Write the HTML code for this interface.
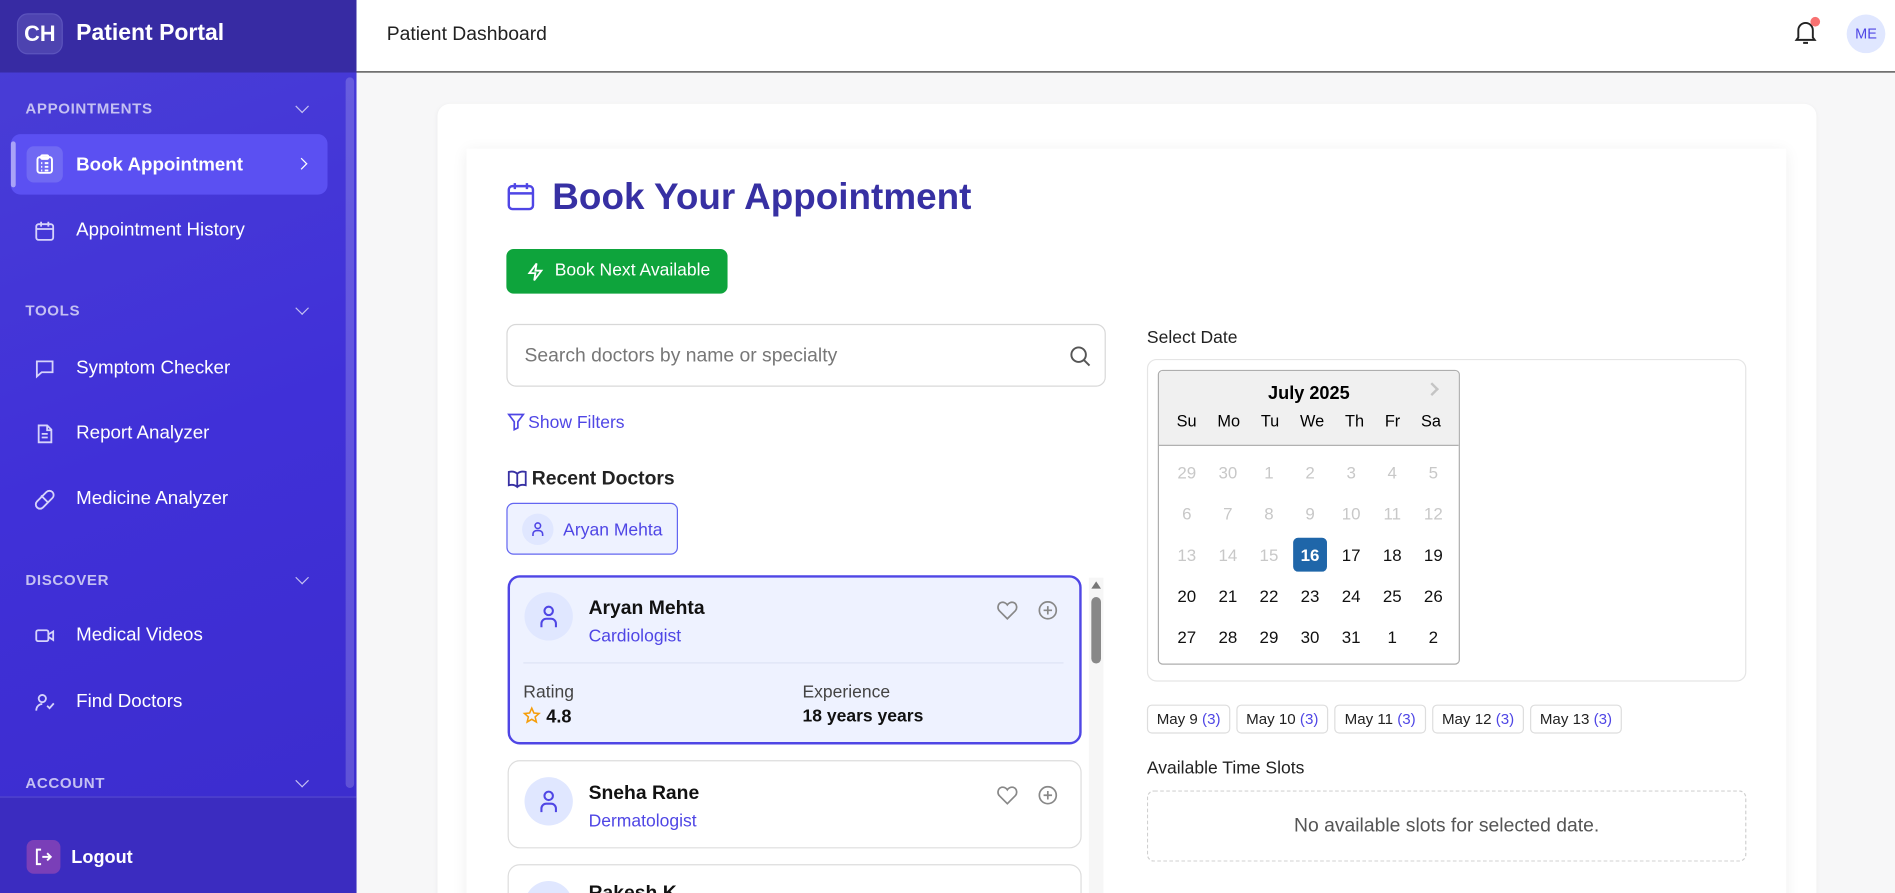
<!DOCTYPE html>
<html><head><meta charset="utf-8"><style>
*{box-sizing:border-box;margin:0;padding:0}
html,body{width:1895px;height:893px;overflow:hidden;background:#f7f7f8;font-family:"Liberation Sans",sans-serif}
#w{width:1568px;height:739px;transform:scale(1.20855);transform-origin:0 0;position:relative;background:#f7f7f8;overflow:hidden}
.a{position:absolute}
.sb{left:0;top:0;width:295px;height:739px;background:linear-gradient(160deg,#4a3fd6 0%,#4030d8 50%,#3b2ccc 100%)}
.sbh{left:0;top:0;width:295px;height:60px;background:#372ba3}
.sec{left:21px;font-size:12.5px;font-weight:bold;color:#c4c0f2;letter-spacing:.5px}
.chev{left:246px;width:8px;height:8px;border-right:1.5px solid #c4c0f2;border-bottom:1.5px solid #c4c0f2;transform:rotate(45deg)}
.it{left:63px;font-size:15.5px;color:#fff}
svg{position:absolute;overflow:visible}
.dc{left:420px;width:475px;border-radius:10px}
.av{width:40px;height:40px;border-radius:50%;background:#e0e7ff}
.chip{top:583px;height:24px;border:1px solid #ddd;border-radius:4px;background:#fff;font-size:12.5px;line-height:22px;text-align:center;color:#222}
.chip span{color:#4f46e5}
.cal td{width:34px;height:34px;text-align:center;font-size:14px;color:#111}
.cal .g{color:#c8c8c8}
</style></head><body><div id="w">
<div class="a sb"></div>
<div class="a sbh"></div>
<div class="a" style="left:14px;top:11px;width:38px;height:34px;border-radius:9px;background:#4d43b0;border:1px solid #5c54bd;color:#fff;font-weight:bold;font-size:18px;line-height:32px;text-align:center">CH</div>
<div class="a" style="left:63px;top:17px;color:#fff;font-weight:bold;font-size:19px">Patient Portal</div>
<div class="a" style="left:286px;top:64px;width:7px;height:588px;border-radius:4px;background:rgba(255,255,255,.18)"></div>
<div class="a sec" style="top:83px">APPOINTMENTS</div><div class="a chev" style="top:84px"></div>
<div class="a" style="left:9px;top:111px;width:262px;height:50px;border-radius:8px;background:#5b50f2"></div>
<div class="a" style="left:9px;top:117px;width:4px;height:38px;border-radius:2px;background:#a9a3f7"></div>
<div class="a" style="left:22px;top:121px;width:30px;height:30px;border-radius:6px;background:#7069f3"></div>
<svg style="left:29px;top:128px" width="16" height="16" fill="none" stroke="#fff" stroke-width="1.6"><rect x="2" y="2" width="12" height="13" rx="2"/><rect x="5" y="0.5" width="6" height="3" rx="1"/><path d="M5 7h1M8 7h3M5 10h1M8 10h3M5 13h1M8 13h3"/></svg>
<div class="a it" style="top:128px;font-weight:bold">Book Appointment</div>
<div class="a" style="left:246px;top:132px;width:7px;height:7px;border-right:1.6px solid #fff;border-top:1.6px solid #fff;transform:rotate(45deg)"></div>
<svg style="left:29px;top:183px" width="16" height="16" fill="none" stroke="#d6d3fb" stroke-width="1.5"><rect x="1" y="2.5" width="14" height="13" rx="2"/><path d="M1 6.5h14M5 0.5v4M11 0.5v4"/></svg>
<div class="a it" style="top:182px">Appointment History</div>
<div class="a sec" style="top:250px">TOOLS</div><div class="a chev" style="top:251px"></div>
<svg style="left:29px;top:297px" width="16" height="16" fill="none" stroke="#d6d3fb" stroke-width="1.5"><path d="M1.5 2h13v9h-9l-4 3.5z"/></svg>
<div class="a it" style="top:296px">Symptom Checker</div>
<svg style="left:29px;top:351px" width="16" height="16" fill="none" stroke="#d6d3fb" stroke-width="1.5"><path d="M3 1h7l3.5 3.5V15H3zM10 1v4h3.5M5.5 8h5M5.5 11h5"/></svg>
<div class="a it" style="top:350px">Report Analyzer</div>
<svg style="left:29px;top:405px" width="16" height="16" fill="none" stroke="#d6d3fb" stroke-width="1.5"><rect x="-1" y="5" width="18" height="7" rx="3.5" transform="rotate(-45 8 8.5)"/><path d="M5 5l6 6"/></svg>
<div class="a it" style="top:404px">Medicine Analyzer</div>
<div class="a sec" style="top:473px">DISCOVER</div><div class="a chev" style="top:474px"></div>
<svg style="left:29px;top:518px" width="16" height="16" fill="none" stroke="#d6d3fb" stroke-width="1.5"><rect x="1" y="3.5" width="10" height="9" rx="1.5"/><path d="M11 7l4-2.5v7L11 9"/></svg>
<div class="a it" style="top:517px">Medical Videos</div>
<svg style="left:29px;top:573px" width="16" height="16" fill="none" stroke="#d6d3fb" stroke-width="1.5"><circle cx="6" cy="5" r="3"/><path d="M1 15c0-3.5 2.5-5.5 5-5.5M10 11l2 2 3.5-4"/></svg>
<div class="a it" style="top:572px">Find Doctors</div>
<div class="a sec" style="top:641px">ACCOUNT</div><div class="a chev" style="top:642px"></div>
<div class="a" style="left:0;top:659px;width:295px;height:80px;background:#3b2cc0;border-top:1px solid #5448cf"></div>
<div class="a" style="left:22px;top:695px;width:28px;height:28px;border-radius:6px;background:#7a3fb8"></div>
<svg style="left:29px;top:702px" width="14" height="14" fill="none" stroke="#fff" stroke-width="1.6"><path d="M5 1H1.5v12H5M6 7h7M10 4l3 3-3 3"/></svg>
<div class="a" style="left:59px;top:701px;color:#fff;font-weight:bold;font-size:15px">Logout</div>
<div class="a" style="left:295px;top:0;width:1273px;height:60px;background:#fff;border-bottom:1.5px solid #333"></div>
<div class="a" style="left:320px;top:20px;font-size:16px;color:#222">Patient Dashboard</div>
<svg style="left:1485px;top:17px" width="18" height="20" fill="none" stroke="#222" stroke-width="1.6"><path d="M3 14V8a6 6 0 0112 0v6l1.5 2h-15zM7 18.5h4"/></svg>
<div class="a" style="left:1498px;top:14px;width:8px;height:8px;border-radius:50%;background:#f87171"></div>
<div class="a" style="left:1528px;top:12px;width:32px;height:32px;border-radius:50%;background:#e0e7ff;color:#4f46e5;font-size:12px;line-height:32px;text-align:center">ME</div>
<div class="a" style="left:362px;top:86px;width:1141px;height:700px;border-radius:10px;background:#fff;box-shadow:0 1px 4px rgba(0,0,0,.05)"></div>
<div class="a" style="left:386px;top:123px;width:1092px;height:660px;background:#fff;box-shadow:0 2px 12px rgba(0,0,0,.07)"></div>
<svg style="left:420px;top:151px" width="22" height="24" fill="none" stroke="#4f46e5" stroke-width="2"><rect x="1" y="3" width="20" height="19" rx="3"/><path d="M1 9h20M6 0.5v5M16 0.5v5"/></svg>
<div class="a" style="left:457px;top:146px;font-size:30.5px;font-weight:bold;color:#3730a3">Book Your Appointment</div>
<div class="a" style="left:419px;top:206px;width:183px;height:37px;border-radius:6px;background:#0ea43c;color:#fff;font-size:14.5px;line-height:37px;padding-left:40px">Book Next Available</div>
<svg style="left:436px;top:217px" width="14" height="16" fill="none" stroke="#fff" stroke-width="1.5"><path d="M8 1L2 9h5l-1 6 6-8H7z"/></svg>
<div class="a" style="left:419px;top:268px;width:496px;height:52px;border:1px solid #d8d8d8;border-radius:8px;background:#fff;font-size:16px;color:#777;line-height:52px;padding-left:14px">Search doctors by name or specialty</div>
<svg style="left:885px;top:286px" width="18" height="18" fill="none" stroke="#555" stroke-width="1.6"><circle cx="7.5" cy="7.5" r="6"/><path d="M12 12l4.5 4.5"/></svg>
<svg style="left:420px;top:342px" width="14" height="14" fill="none" stroke="#4f46e5" stroke-width="1.4"><path d="M1 1h12L8.5 7v5l-3 1.5V7z"/></svg>
<div class="a" style="left:437px;top:342px;font-size:14.5px;color:#4f46e5">Show Filters</div>
<svg style="left:420px;top:389px" width="16" height="14" fill="none" stroke="#3730a3" stroke-width="1.5"><path d="M8 3C6 1 3 1 1 1.5v11c2-.5 5-.5 7 1.5 2-2 5-2 7-1.5v-11C13 1 10 1 8 3zM8 3v11"/></svg>
<div class="a" style="left:440px;top:388px;font-size:16px;font-weight:bold;color:#222">Recent Doctors</div>
<div class="a" style="left:419px;top:416px;width:142px;height:43px;border:1px solid #6366f1;border-radius:6px;background:#eef2ff"></div>
<div class="a av" style="left:432px;top:425px;width:26px;height:26px"></div>
<svg style="left:440px;top:432px" width="10" height="12" fill="none" stroke="#4f46e5" stroke-width="1.3"><circle cx="5" cy="3" r="2.3"/><path d="M1 11.5V10a3 3 0 013-3h2a3 3 0 013 3v1.5"/></svg>
<div class="a" style="left:466px;top:431px;font-size:14.5px;color:#4f46e5">Aryan Mehta</div>
<div class="a dc" style="top:476px;height:140px;border:2px solid #4f46e5;background:#eef2ff"></div>
<div class="a av" style="left:434px;top:490px"></div>
<svg style="left:446px;top:501px" width="16" height="19" fill="none" stroke="#4f46e5" stroke-width="1.7"><circle cx="8" cy="4.5" r="3.5"/><path d="M2 18v-3a4 4 0 014-4h4a4 4 0 014 4v3"/></svg>
<div class="a" style="left:487px;top:495px;font-size:16px;font-weight:bold;color:#111">Aryan Mehta</div>
<div class="a" style="left:487px;top:519px;font-size:14.5px;color:#4f46e5">Cardiologist</div>
<svg style="left:825px;top:497px" width="17" height="16" fill="none" stroke="#888" stroke-width="1.4"><path d="M8.5 15L2 8.5C0 6.5.5 2.5 3.5 1.5c2-.6 4 .5 5 2 1-1.5 3-2.6 5-2 3 1 3.5 5 1.5 7z"/></svg>
<svg style="left:859px;top:497px" width="16" height="16" fill="none" stroke="#888" stroke-width="1.4"><circle cx="8" cy="8" r="7"/><path d="M8 4.5v7M4.5 8h7"/></svg>
<div class="a" style="left:433px;top:548px;width:447px;height:1px;background:#dde3f5"></div>
<div class="a" style="left:433px;top:565px;font-size:14.5px;color:#444">Rating</div>
<svg style="left:433px;top:585px" width="14" height="14" fill="none" stroke="#f59e0b" stroke-width="1.3"><path d="M7 1l1.8 4 4.2.4-3.2 2.8 1 4.2L7 10.2 3.2 12.4l1-4.2L1 5.4l4.2-.4z"/></svg>
<div class="a" style="left:452px;top:585px;font-size:15px;font-weight:bold;color:#111">4.8</div>
<div class="a" style="left:664px;top:565px;font-size:14.5px;color:#444">Experience</div>
<div class="a" style="left:664px;top:585px;font-size:14.5px;font-weight:bold;color:#111">18 years years</div>
<div class="a dc" style="top:629px;height:73px;border:1px solid #ddd;background:#fff"></div>
<div class="a av" style="left:434px;top:643px"></div>
<svg style="left:446px;top:654px" width="16" height="19" fill="none" stroke="#4f46e5" stroke-width="1.7"><circle cx="8" cy="4.5" r="3.5"/><path d="M2 18v-3a4 4 0 014-4h4a4 4 0 014 4v3"/></svg>
<div class="a" style="left:487px;top:648px;font-size:16px;font-weight:bold;color:#111">Sneha Rane</div>
<div class="a" style="left:487px;top:672px;font-size:14.5px;color:#4f46e5">Dermatologist</div>
<svg style="left:825px;top:650px" width="17" height="16" fill="none" stroke="#888" stroke-width="1.4"><path d="M8.5 15L2 8.5C0 6.5.5 2.5 3.5 1.5c2-.6 4 .5 5 2 1-1.5 3-2.6 5-2 3 1 3.5 5 1.5 7z"/></svg>
<svg style="left:859px;top:650px" width="16" height="16" fill="none" stroke="#888" stroke-width="1.4"><circle cx="8" cy="8" r="7"/><path d="M8 4.5v7M4.5 8h7"/></svg>
<div class="a dc" style="top:715px;height:60px;border:1px solid #ddd;background:#fff"></div>
<div class="a av" style="left:434px;top:729px"></div>
<div class="a" style="left:487px;top:731px;font-size:16px;font-weight:bold;color:#111">Rakesh K</div>
<div class="a" style="left:901px;top:478px;width:12px;height:261px;background:#f6f6f6"></div>
<div class="a" style="left:903px;top:481px;width:0;height:0;border-left:4px solid transparent;border-right:4px solid transparent;border-bottom:6px solid #777"></div>
<div class="a" style="left:903px;top:494px;width:8px;height:55px;border-radius:4px;background:#888"></div>
<div class="a" style="left:949px;top:272px;font-size:14.5px;color:#222">Select Date</div>
<div class="a" style="left:949px;top:297px;width:496px;height:267px;border:1px solid #e5e5e5;border-radius:8px"></div>
<div class="a" style="left:958px;top:306px;width:250px;height:244px;border:1px solid #aeaeae;border-radius:4px;background:#fff;overflow:hidden">
<div style="height:62px;background:#f0f0f0;border-bottom:1px solid #aeaeae;text-align:center">
<div style="font-weight:bold;font-size:15px;padding-top:10px;color:#000">July 2025</div>
<div style="display:flex;justify-content:space-around;padding:7px 6px 0;font-size:13.5px;color:#000"><span>Su</span><span>Mo</span><span>Tu</span><span>We</span><span>Th</span><span>Fr</span><span>Sa</span></div>
</div>
<table class="cal" style="border-collapse:collapse;margin:5px 0 0 6px">
<tr><td class="g">29</td><td class="g">30</td><td class="g">1</td><td class="g">2</td><td class="g">3</td><td class="g">4</td><td class="g">5</td></tr>
<tr><td class="g">6</td><td class="g">7</td><td class="g">8</td><td class="g">9</td><td class="g">10</td><td class="g">11</td><td class="g">12</td></tr>
<tr><td class="g">13</td><td class="g">14</td><td class="g">15</td><td><div style="width:28px;height:28px;margin:auto;border-radius:4px;background:#1f66a9;color:#fff;font-weight:bold;line-height:28px">16</div></td><td>17</td><td>18</td><td>19</td></tr>
<tr><td>20</td><td>21</td><td>22</td><td>23</td><td>24</td><td>25</td><td>26</td></tr>
<tr><td>27</td><td>28</td><td>29</td><td>30</td><td>31</td><td>1</td><td>2</td></tr>
</table></div>
<div class="a" style="left:1181px;top:318px;width:8px;height:8px;border-right:2px solid #c4c4c4;border-top:2px solid #c4c4c4;transform:rotate(45deg)"></div>
<div class="a chip" style="left:949px;width:69px">May 9 <span>(3)</span></div>
<div class="a chip" style="left:1023px;width:76px">May 10 <span>(3)</span></div>
<div class="a chip" style="left:1104px;width:76px">May 11 <span>(3)</span></div>
<div class="a chip" style="left:1185px;width:76px">May 12 <span>(3)</span></div>
<div class="a chip" style="left:1266px;width:76px">May 13 <span>(3)</span></div>
<div class="a" style="left:949px;top:628px;font-size:14.5px;color:#222">Available Time Slots</div>
<div class="a" style="left:949px;top:654px;width:496px;height:59px;border:1px dashed #d0d0d0;border-radius:6px;text-align:center;line-height:57px;font-size:16px;color:#555">No available slots for selected date.</div>
</div></body></html>
